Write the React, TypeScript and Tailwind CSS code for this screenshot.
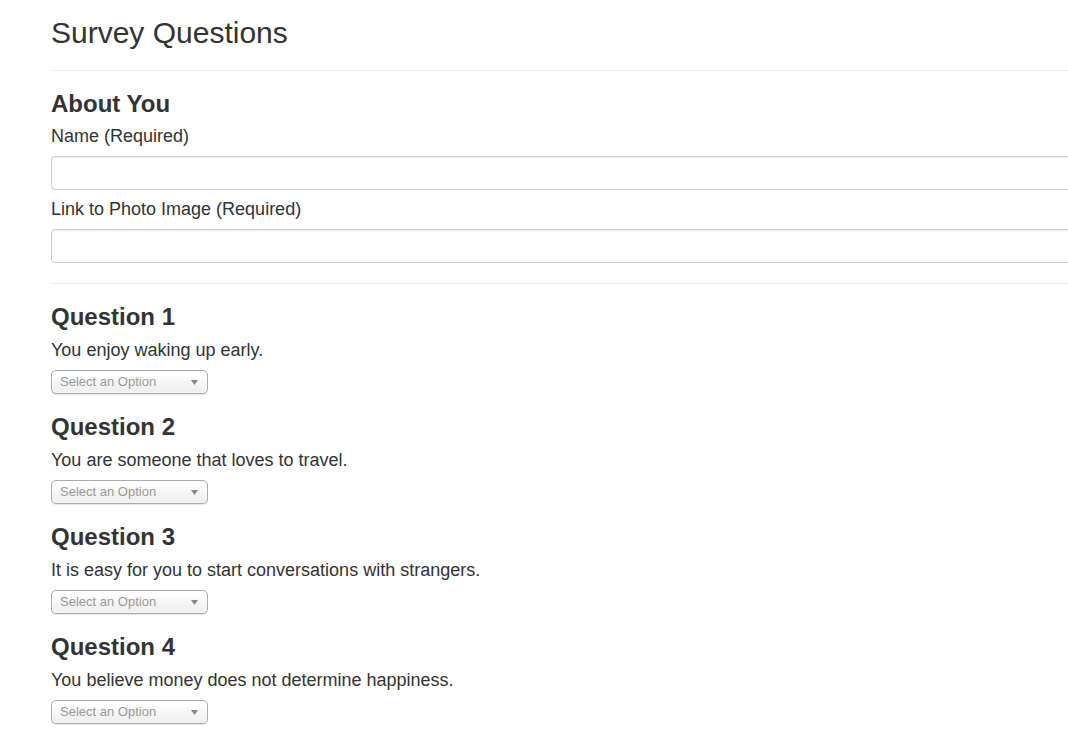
import React from 'react';

const questions = [
  { id: 1, text: 'You enjoy waking up early.' },
  { id: 2, text: 'You are someone that loves to travel.' },
  { id: 3, text: 'It is easy for you to start conversations with strangers.' },
  { id: 4, text: 'You believe money does not determine happiness.' },
];

const OptionSelect: React.FC = () => (
  <div className="mt-[10px] flex h-[24px] w-[157px] items-center justify-between rounded-[5px] border border-[#aaa] bg-gradient-to-b from-white from-20% via-[#f6f6f6] via-50% to-[#eee] pl-[8px] pr-[9px] shadow-[inset_0_0_3px_#fff,0_1px_1px_rgba(0,0,0,0.1)]">
    <span className="text-[13px] leading-[22px] text-[#999]">Select an Option</span>
    <svg width="7" height="5" viewBox="0 0 7 5" className="mt-[1px]">
      <path d="M0 0 H7 L3.5 5 Z" fill="#888" />
    </svg>
  </div>
);

export default function App() {
  return (
    <div className="w-full overflow-hidden bg-white font-['Liberation_Sans',Arial,sans-serif] text-[#333]">
      <div className="w-[1100px] pb-[20px] pl-[51px]">
        <h2 className="mt-[16px] h-[33px] text-[30px] leading-[33px]">Survey Questions</h2>
        <hr className="mt-[21px] border-0 border-t border-[#eee]" />

        <h3 className="mt-[20px] h-[26px] text-[24px] font-bold leading-[26px]">About You</h3>
        <label className="mt-[9px] block h-[20px] text-[18px] leading-[20px]">Name (Required)</label>
        <input
          type="text"
          className="mt-[10px] block h-[34px] w-full rounded-[4px] border border-[#ccc] px-3 shadow-[inset_0_1px_1px_rgba(0,0,0,0.075)] outline-none"
        />
        <label className="mt-[9px] block h-[20px] text-[18px] leading-[20px]">Link to Photo Image (Required)</label>
        <input
          type="text"
          className="mt-[10px] block h-[34px] w-full rounded-[4px] border border-[#ccc] px-3 shadow-[inset_0_1px_1px_rgba(0,0,0,0.075)] outline-none"
        />
        <hr className="mt-[20px] border-0 border-t border-[#eee]" />

        {questions.map((q) => (
          <div key={q.id}>
            <h3 className="mt-[20px] h-[26px] text-[24px] font-bold leading-[26px]">Question {q.id}</h3>
            <p className="mt-[10px] h-[20px] text-[18px] leading-[20px]">{q.text}</p>
            <OptionSelect />
          </div>
        ))}
      </div>
    </div>
  );
}
